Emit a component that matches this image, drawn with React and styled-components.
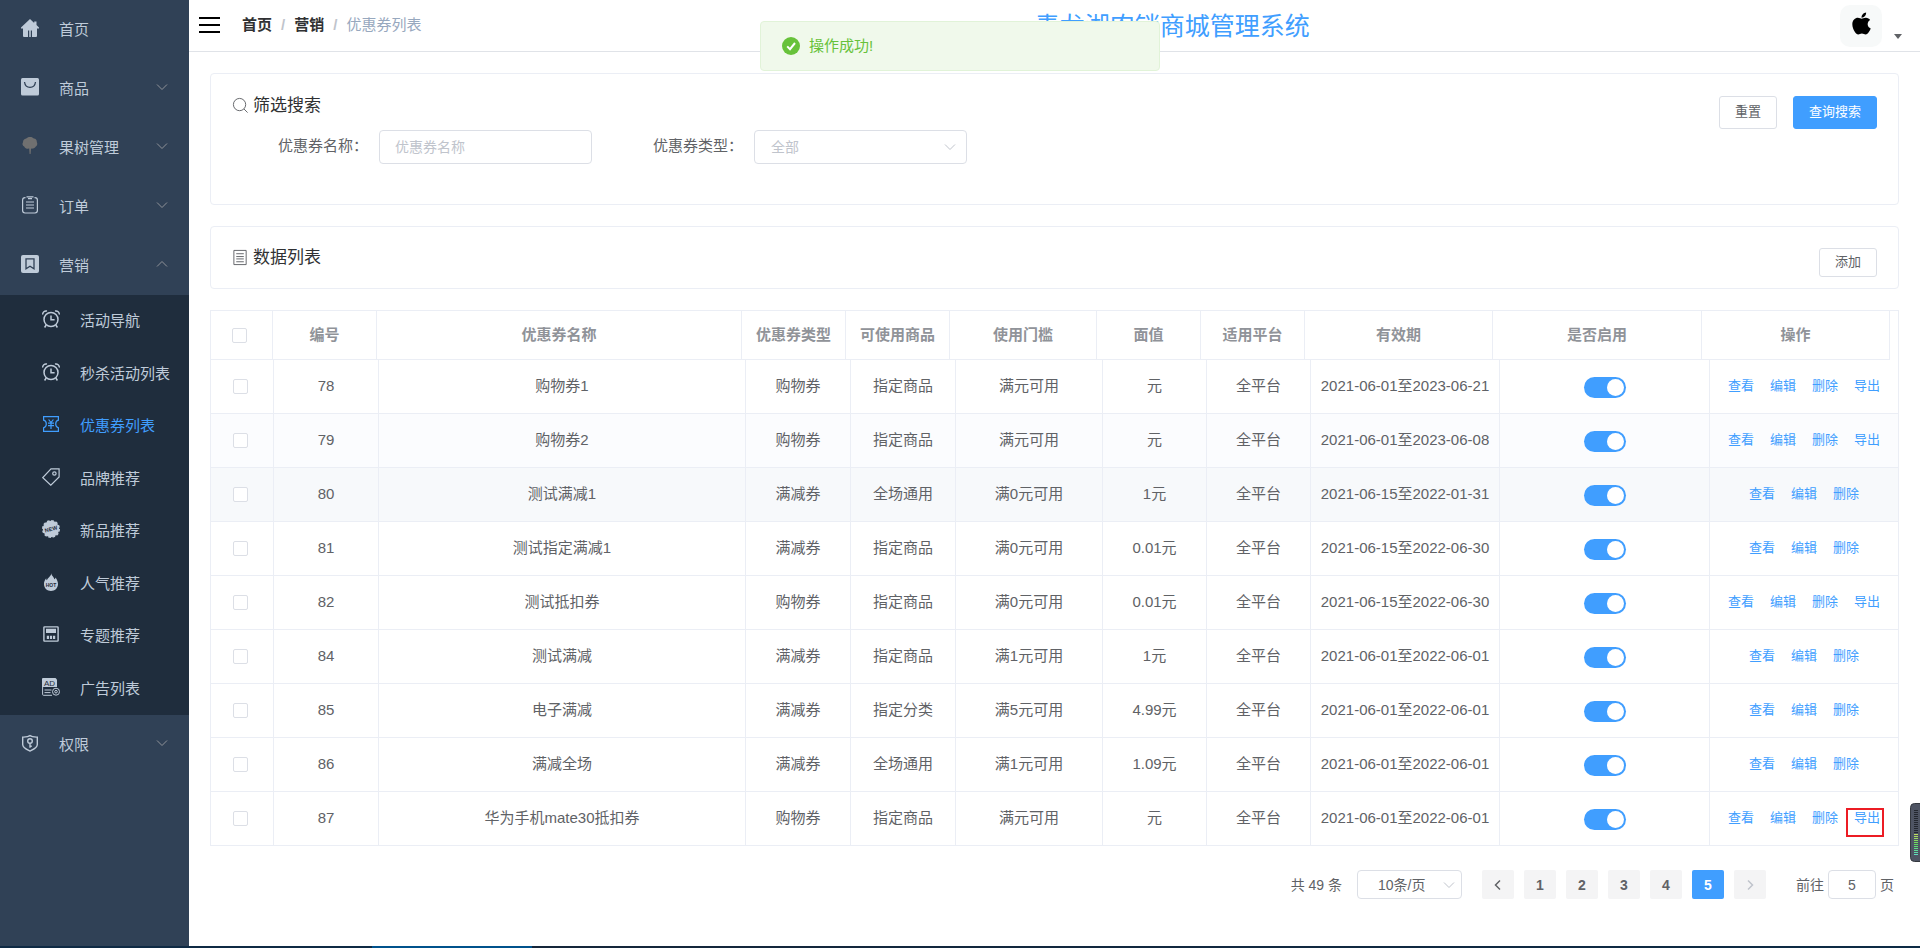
import React from 'react';
import styled, { createGlobalStyle } from 'styled-components';
import { FaApple } from 'react-icons/fa';

const Global = createGlobalStyle`
  *, *::before, *::after { box-sizing: border-box; }
  body {
    margin: 0;
    background: #fff;
    color: #606266;
    font-family: "Liberation Sans", "Noto Sans CJK SC", sans-serif;
    font-size: 15px;
    line-height: 20px;
  }
  button, input, select { font-family: inherit; margin: 0; }
  h1, h2, ul, ol { margin: 0; padding: 0; font-weight: 400; list-style: none; }
  a { color: inherit; text-decoration: none; }
  svg { display: block; flex: none; }
`;

/* ---------- icons ---------- */

const Glyph = styled.svg.attrs((p) => ({
  viewBox: `0 0 ${p.$box || 18} ${p.$box || 18}`,
  'aria-hidden': true,
}))`
  width: ${(p) => p.$size || 18}px;
  height: ${(p) => p.$size || 18}px;
  fill: none;
  stroke: ${(p) => (p.$solid ? 'none' : 'currentColor')};
  stroke-width: ${(p) => p.$weight || 1};
`;

const ChevronPath = ({ dir }) => {
  const paths = {
    down: 'M1 3.5 6 8.5 11 3.5',
    up: 'M1 8.5 6 3.5 11 8.5',
    left: 'M8 1.5 3.5 6 8 10.5',
    right: 'M4 1.5 8.5 6 4 10.5',
  };
  return <path d={paths[dir]} />;
};

const Chevron = ({ dir, size = 12, weight = 1 }) => (
  <Glyph $box={12} $size={size} $weight={weight}>
    <ChevronPath dir={dir} />
  </Glyph>
);

const Alarm = () => (
  <Glyph $weight="1.5">
    <circle cx="9" cy="9.5" r="7" />
    <path d="M9 5.5v4.300h3.600M.8 4.500C.4 2.200 2.600.5 5 1.100M17.200 4.500C17.600 2.200 15.400.5 13 1.100M4.200 15 2.600 17.500M13.800 15l1.600 2.500" />
  </Glyph>
);

const icons = {
  home: (
    <Glyph $solid>
      <path
        d="M9 0 0 8.500v1h2V17q0 1 1 1h4v-6.500h1.200V18h1.600v-6.500H11V18h4q1 0 1-1V9.500h2v-1L15.500 6V2.500h-2.300V4z"
        fill="currentColor"
      />
    </Glyph>
  ),
  bag: (
    <Glyph>
      <rect x="0" y="0" width="18" height="17.500" rx="1.500" fill="currentColor" stroke="none" />
      <path d="M3.500 4C4.500 11.200 13.500 11.200 14.500 4" stroke="#304156" strokeWidth="1.300" />
    </Glyph>
  ),
  tree: (
    <Glyph $solid>
      <path
        d="M9 0C11 0 12 .7 12.800 1.600 15 1.700 16 3.500 15.800 5c1 1.800.4 3.600-1 4.400C13.800 11 12 11.800 10 11.600L9.600 17H8.600L8.200 11.600C6 12 4 11.200 3.200 9.400 1.400 8.600 1 6.600 2 5.200 2 3.200 3.200 2 5.200 1.600 6 .6 7.400 0 9 0z"
        fill="#707070"
      />
    </Glyph>
  ),
  order: (
    <Glyph $weight="1.200">
      <path d="M4.500 1.600H4Q1.600 1.600 1.600 4v10.600Q1.600 17 4 17h10q2.400 0 2.400-2.400V4q0-2.400-2.400-2.400h-.5" />
      <path d="M5.500.8h7M7 2.600h4M5 6h8M5 9h8M5 12h8" />
    </Glyph>
  ),
  bookmark: (
    <Glyph>
      <rect x="0" y="0" width="18" height="18" rx="2" fill="currentColor" stroke="none" />
      <path d="M5 3.800h8v10l-4-2.600-4 2.600z" stroke="#304156" strokeWidth="1.300" />
    </Glyph>
  ),
  alarm: <Alarm />,
  coupon: (
    <Glyph $weight="1.200">
      <path d="M1.600 1.600h14.800v3.600c-3.600 1-3.600 6.600 0 7.600v3.600H1.600v-3.600c3.600-1 3.600-6.600 0-7.600z" />
      <path d="M6.600 4.500 9 7.500l2.400-3M6 8.200h6M6 10.600h6M9 7.500V14" />
    </Glyph>
  ),
  tag: (
    <Glyph $weight="1.200">
      <path d="M9 .9h8.100V9L8.800 17.200.8 9.600z" />
      <circle cx="12.400" cy="5.500" r="1.700" />
    </Glyph>
  ),
  fresh: (
    <Glyph $solid>
      <circle cx="9" cy="9" r="8.200" fill="currentColor" />
      <circle cx="9" cy="9" r="8.200" stroke="currentColor" strokeWidth="1.600" strokeDasharray="2.600 1.690" />
      <text x="9" y="11" textAnchor="middle" fontSize="5.500" fontWeight="700" fill="#1f2d3d" transform="rotate(-15 9 9)">
        NEW
      </text>
    </Glyph>
  ),
  hot: (
    <Glyph $solid>
      <path
        d="M9.400 0c-.2 2.600 2.400 3.600 3 6.200.8-.3 1-1 1-1.800 1.700 2 2.800 4.600 2.600 7.200-.3 3.800-3.200 6.400-7 6.400s-6.800-2.600-7-6.400C1.800 8.600 3 6.800 4.200 5.200c0 1 .2 1.600.8 2C5.600 4.400 9.200 3.600 9.400 0z"
        fill="currentColor"
      />
      <text x="9" y="13.500" textAnchor="middle" fontSize="5" fontWeight="700" fill="#1f2d3d">
        HOT
      </text>
    </Glyph>
  ),
  topic: (
    <Glyph $weight="1.400">
      <rect x="1.900" y="1.900" width="14.200" height="14.200" rx=".6" />
      <path d="M4 3.700h10v4.200H4zM4.800 10.800h2.200v3.200H4.800zM7.900 10.800h2.200v3.200H7.900zM11 10.800h2.200v3.200H11z" fill="currentColor" stroke="none" />
    </Glyph>
  ),
  ad: (
    <Glyph>
      <path d="M1 0h12.500L15 1.500V9H0V1Q0 0 1 0z" fill="currentColor" stroke="none" />
      <text x="7.500" y="7.600" textAnchor="middle" fontSize="8" fill="#1f2d3d" stroke="none">
        AD
      </text>
      <path d="M.6 9v7.400q0 .9.9.9H10M2.500 12h7M2.500 14.600h6" />
      <circle cx="14" cy="13.700" r="3.500" />
      <circle cx="14" cy="13.700" r="1.300" />
    </Glyph>
  ),
  shield: (
    <Glyph $weight="1.400">
      <path d="M9 1.600C7 3 4.600 3 1.700 3.200v7.300C1.700 14 5.500 15.400 9 17c3.500-1.600 7.300-3 7.300-6.500V3.200C13.400 3 11 3 9 1.600z" />
      <circle cx="9" cy="7" r="2.300" />
      <path d="M9 9.300v4.500M9 12.300h1.800" />
    </Glyph>
  ),
};

/* ---------- shell ---------- */

const Layout = styled.div`
  display: flex;
  min-height: 100vh;
`;

const Sidebar = styled.nav`
  flex: 0 0 189px;
  background: #304156;
  color: #bfcbd9;
`;

const MenuItem = styled.a`
  display: flex;
  align-items: center;
  gap: 20px;
  height: 59px;
  padding: 0 21px;
  > span { flex: 1; white-space: nowrap; }
  > svg { margin-bottom: 4px; }
  > svg:last-child:not(:first-child) { color: #909399; }
`;

const SubMenu = styled.ul`
  display: grid;
  grid-auto-rows: 1fr;
  min-height: 420px;
  background: #1f2d3d;
`;

const SubItem = styled.a`
  display: flex;
  align-items: center;
  gap: 20px;
  height: 100%;
  padding-left: 42px;
  white-space: nowrap;
  color: ${(p) => (p.$active ? '#409eff' : 'inherit')};
  > svg { margin-bottom: 4px; }
`;

const Page = styled.div`
  flex: 1;
  min-width: 0;
`;

const Header = styled.header`
  display: grid;
  grid-template-columns: 10fr auto 7fr;
  align-items: center;
  height: 52px;
  padding: 0 18px 0 0;
  border-bottom: 1px solid #e0e3e8;
`;

const HeaderStart = styled.div`
  display: flex;
  align-items: center;
  gap: 22px;
  padding: 0 0 2px 10px;
`;

const MenuToggle = styled.button`
  display: grid;
  gap: 5px;
  width: 21px;
  padding: 0;
  border: 0;
  background: none;
  i { height: 2px; background: #000; }
`;

const Crumbs = styled.ol`
  display: flex;
  li + li::before {
    content: "/";
    margin: 0 9px;
    font-weight: 700;
    color: #c0c4cc;
  }
`;

const Crumb = styled.li`
  color: ${(p) => (p.$last ? '#97a8be' : '#303133')};
  font-weight: ${(p) => (p.$last ? 400 : 700)};
`;

const SystemTitle = styled.h1`
  font-size: 25px;
  line-height: 32px;
  white-space: nowrap;
  color: #409eff;
`;

const UserMenu = styled.button`
  display: flex;
  align-items: flex-end;
  justify-self: end;
  gap: 12px;
  padding: 0;
  border: 0;
  background: none;
`;

const Avatar = styled.span`
  display: flex;
  justify-content: center;
  width: 42px;
  height: 42px;
  padding-top: 6px;
  border-radius: 10px;
  background: #f7f9f9;
  color: #000;
`;

const Caret = styled.span`
  margin-bottom: 8px;
  border: 4px solid transparent;
  border-top: 5px solid #606266;
  border-bottom: 0;
`;

const Main = styled.main`
  padding: 21px;
`;

/* ---------- cards ---------- */

const Card = styled.section`
  margin-bottom: 21px;
  padding: ${(p) => p.$pad};
  border: 1px solid #ebeef5;
  border-radius: 4px;
`;

const CardHead = styled.div`
  display: flex;
  align-items: flex-start;
  justify-content: space-between;
`;

const CardTitle = styled.h2`
  display: flex;
  align-items: center;
  gap: 4px;
  font-size: 17px;
  line-height: 20px;
  color: #303133;
  svg { margin-bottom: 2px; color: #606266; }
`;

const Actions = styled.div`
  display: flex;
  gap: 16px;
`;

const Button = styled.button`
  height: ${(p) => (p.$small ? 29 : 33)}px;
  padding: 0 15px 4px;
  border: 1px solid ${(p) => (p.$primary ? '#409eff' : '#dcdfe6')};
  border-radius: 3px;
  background: ${(p) => (p.$primary ? '#409eff' : '#fff')};
  color: ${(p) => (p.$primary ? '#fff' : '#606266')};
  font-size: 13px;
`;

const FilterForm = styled.form`
  display: flex;
  gap: 15px;
  margin-top: 1px;
`;

const Field = styled.div`
  display: flex;
  > label {
    width: 147px;
    padding-right: 11px;
    line-height: 32px;
    text-align: right;
    white-space: nowrap;
  }
`;

const control = `
  border: 1px solid #dcdfe6;
  border-radius: 4px;
  background: #fff;
  font-size: 14px;
  outline: 0;
`;

const TextBox = styled.input`
  ${control}
  width: 213px;
  height: 34px;
  padding: 0 15px;
  color: #606266;
  &::placeholder { color: #c0c4cc; opacity: 1; }
`;

const SelectWrap = styled.span`
  position: relative;
  display: inline-flex;
  color: #c0c4cc;
  > svg {
    position: absolute;
    right: ${(p) => (p.$small ? 7 : 11)}px;
    top: 50%;
    margin-top: -6px;
    pointer-events: none;
  }
`;

const Select = styled.select`
  ${control}
  appearance: none;
  width: ${(p) => (p.$small ? 105 : 213)}px;
  height: ${(p) => (p.$small ? 29 : 34)}px;
  padding: 0 ${(p) => (p.$small ? 20 : 16)}px;
  color: ${(p) => (p.$small ? '#606266' : '#c0c4cc')};
`;

/* ---------- table ---------- */

const Table = styled.table`
  display: block;
  border: 1px solid #ebeef5;
  border-bottom: 0;
  border-spacing: 0;
  thead, tbody { display: table; table-layout: fixed; border-spacing: 0; width: 100%; }
  thead { width: calc(100% - 8px); color: #909399; }
`;

const Row = styled.tr`
  background: ${(p) => p.$tint || '#fff'};
`;

const HeadCell = styled.th`
  width: ${(p) => p.$w}px;
  height: 49px;
  padding: ${(p) => (p.$check ? '0 0 0 21px' : 0)};
  border: solid #ebeef5;
  border-width: 0 1px 1px 0;
  text-align: ${(p) => (p.$check ? 'left' : 'center')};
  font-weight: 700;
  white-space: nowrap;
`;

const Cell = styled.td`
  width: ${(p) => p.$w}px;
  height: 54px;
  padding: ${(p) => (p.$check ? '0 0 0 22px' : '0 0 2px')};
  border: solid #ebeef5;
  border-width: 0 1px 1px 0;
  text-align: ${(p) => (p.$check ? 'left' : 'center')};
  white-space: nowrap;
  &:last-child { border-right: 0; }
`;

const Check = styled.input.attrs({ type: 'checkbox' })`
  appearance: none;
  display: block;
  width: 15px;
  height: 15px;
  border: 1px solid #dcdfe6;
  border-radius: 2px;
  background: #fff;
`;

const Switch = styled.input.attrs({ type: 'checkbox', role: 'switch' })`
  appearance: none;
  display: block;
  width: 42px;
  height: 21px;
  margin: 4px auto 0;
  padding: 2px;
  border-radius: 11px;
  background: #dcdfe6;
  &::before {
    content: "";
    display: block;
    width: 17px;
    height: 17px;
    border-radius: 50%;
    background: #fff;
  }
  &:checked { background: #409eff; }
  &:checked::before { margin-left: auto; }
`;

const RowActions = styled.div`
  display: flex;
  justify-content: center;
  gap: 16px;
  font-size: 13px;
  color: #409eff;
`;

const RowLink = styled.a`
  position: relative;
  &::after {
    content: ${(p) => (p.$marked ? '""' : 'none')};
    position: absolute;
    inset: 0 -4px -9px -8px;
    border: 2px solid #ec1c24;
  }
`;

/* ---------- pagination ---------- */

const Pagination = styled.nav`
  display: flex;
  align-items: center;
  justify-content: flex-end;
  gap: 15px;
  padding: 24px 5px 0 0;
  font-size: 14px;
`;

const Pages = styled.div`
  display: flex;
  gap: 10px;
  margin: 0 15px 0 5px;
`;

const PageButton = styled.button`
  display: flex;
  align-items: center;
  justify-content: center;
  width: 32px;
  height: 29px;
  padding: 0;
  border: 0;
  border-radius: 2px;
  background: ${(p) => (p.$active ? '#409eff' : '#f4f4f5')};
  color: ${(p) => (p.$active ? '#fff' : '#606266')};
  font-size: 14px;
  font-weight: 700;
  &:disabled { color: #c0c4cc; }
`;

const Jump = styled.label`
  display: flex;
  align-items: center;
  gap: 4px;
`;

const JumpBox = styled.input`
  ${control}
  width: 48px;
  height: 29px;
  padding: 0;
  color: #606266;
  text-align: center;
`;

/* ---------- overlays ---------- */

const Message = styled.div`
  position: fixed;
  top: 21px;
  left: 50%;
  transform: translateX(-50%);
  display: flex;
  align-items: center;
  gap: 9px;
  width: 400px;
  height: 50px;
  padding: 0 21px;
  border: 1px solid #e1f3d8;
  border-radius: 4px;
  background: #f0f9eb;
  color: #67c23a;
`;

const Meter = styled.svg`
  position: fixed;
  right: 0;
  top: 803px;
  width: 10px;
  height: 59px;
`;

const Dock = styled.div`
  position: fixed;
  inset: auto 0 0 0;
  height: 2px;
  background: linear-gradient(90deg, #0f2a44 372px, #00528c 372px, #00528c 532px, #15263a 532px, #0d2b45);
`;

/* ---------- data ---------- */

const menu = [
  { icon: 'home', label: '首页' },
  { icon: 'bag', label: '商品', dir: 'down' },
  { icon: 'tree', label: '果树管理', dir: 'down' },
  { icon: 'order', label: '订单', dir: 'down' },
  {
    icon: 'bookmark',
    label: '营销',
    dir: 'up',
    children: [
      ['alarm', '活动导航'],
      ['alarm', '秒杀活动列表'],
      ['coupon', '优惠券列表'],
      ['tag', '品牌推荐'],
      ['fresh', '新品推荐'],
      ['hot', '人气推荐'],
      ['topic', '专题推荐'],
      ['ad', '广告列表'],
    ],
  },
  { icon: 'shield', label: '权限', dir: 'down' },
];

const columns = [
  ['编号', 104, 105],
  ['优惠券名称', 365, 367],
  ['优惠券类型', 104, 105],
  ['可使用商品', 104, 105],
  ['使用门槛', 147, 147],
  ['面值', 104, 104],
  ['适用平台', 104, 104],
  ['有效期', 188, 189],
  ['是否启用', 209, 210],
  ['操作', 188, 188],
];

const rows = [
  ['78', '购物券1', '购物券', '指定商品', '满元可用', '元', '全平台', '2021-06-01至2023-06-21'],
  ['79', '购物券2', '购物券', '指定商品', '满元可用', '元', '全平台', '2021-06-01至2023-06-08'],
  ['80', '测试满减1', '满减券', '全场通用', '满0元可用', '1元', '全平台', '2021-06-15至2022-01-31'],
  ['81', '测试指定满减1', '满减券', '指定商品', '满0元可用', '0.01元', '全平台', '2021-06-15至2022-06-30'],
  ['82', '测试抵扣券', '购物券', '指定商品', '满0元可用', '0.01元', '全平台', '2021-06-15至2022-06-30'],
  ['84', '测试满减', '满减券', '指定商品', '满1元可用', '1元', '全平台', '2021-06-01至2022-06-01'],
  ['85', '电子满减', '满减券', '指定分类', '满5元可用', '4.99元', '全平台', '2021-06-01至2022-06-01'],
  ['86', '满减全场', '满减券', '全场通用', '满1元可用', '1.09元', '全平台', '2021-06-01至2022-06-01'],
  ['87', '华为手机mate30抵扣券', '购物券', '指定商品', '满元可用', '元', '全平台', '2021-06-01至2022-06-01'],
];

const tints = { 79: '#fbfcfe', 80: '#f7f9fb' };

/* ---------- page ---------- */

const SideMenu = () => (
  <Sidebar aria-label="主菜单">
    <ul>
      {menu.map((m) => (
        <li key={m.label}>
          <MenuItem href="#">
            {icons[m.icon]}
            <span>{m.label}</span>
            {m.dir && <Chevron dir={m.dir} />}
          </MenuItem>
          {m.children && (
            <SubMenu>
              {m.children.map(([icon, label]) => (
                <li key={label}>
                  <SubItem href="#" $active={label === '优惠券列表'}>
                    {icons[icon]}
                    <span>{label}</span>
                  </SubItem>
                </li>
              ))}
            </SubMenu>
          )}
        </li>
      ))}
    </ul>
  </Sidebar>
);

const CouponTable = () => (
  <Table>
    <thead>
      <tr>
        <HeadCell $w={62} $check>
          <Check aria-label="全选" />
        </HeadCell>
        {columns.map(([label, w]) => (
          <HeadCell key={label} $w={w} scope="col">
            {label}
          </HeadCell>
        ))}
      </tr>
    </thead>
    <tbody>
      {rows.map((row) => {
        const links = ['查看', '编辑', '删除'];
        if (row[2] === '购物券') links.push('导出');
        return (
          <Row key={row[0]} $tint={tints[row[0]]}>
            <Cell $w={63} $check>
              <Check aria-label={`选择 ${row[0]}`} />
            </Cell>
            {row.map((text, i) => (
              <Cell key={columns[i][0]} $w={columns[i][2]}>
                {text}
              </Cell>
            ))}
            <Cell $w={columns[8][2]}>
              <Switch defaultChecked aria-label={`启用 ${row[0]}`} />
            </Cell>
            <Cell $w={columns[9][2]}>
              <RowActions>
                {links.map((l) => (
                  <RowLink key={l} href="#" $marked={row[0] === '87' && l === '导出'}>
                    {l}
                  </RowLink>
                ))}
              </RowActions>
            </Cell>
          </Row>
        );
      })}
    </tbody>
  </Table>
);

const meterBars = Array.from({ length: 23 }, (_, i) => {
  if (i < 12) return '#23272f';
  return `hsl(${75 + (i - 12) * 9} 65% 62%)`;
});

export default function App() {
  return (
    <>
      <Global />
      <Layout>
        <SideMenu />
        <Page>
          <Header>
            <HeaderStart>
              <MenuToggle type="button" aria-label="折叠菜单">
                <i />
                <i />
                <i />
              </MenuToggle>
              <Crumbs>
                <Crumb>
                  <a href="#">首页</a>
                </Crumb>
                <Crumb>
                  <a href="#">营销</a>
                </Crumb>
                <Crumb $last>优惠券列表</Crumb>
              </Crumbs>
            </HeaderStart>
            <SystemTitle>青龙湖农销商城管理系统</SystemTitle>
            <UserMenu type="button" aria-label="用户菜单">
              <Avatar>
                <FaApple size={25} />
              </Avatar>
              <Caret />
            </UserMenu>
          </Header>

          <Main>
            <Card $pad="22px 21px 40px">
              <CardHead>
                <CardTitle>
                  <Glyph $size={17}>
                    <circle cx="8" cy="8" r="6.500" />
                    <path d="M12.700 12.700 16.500 16.500" />
                  </Glyph>
                  筛选搜索
                </CardTitle>
                <Actions>
                  <Button type="button">重置</Button>
                  <Button type="button" $primary>
                    查询搜索
                  </Button>
                </Actions>
              </CardHead>
              <FilterForm>
                <Field>
                  <label htmlFor="coupon-name">优惠券名称：</label>
                  <TextBox id="coupon-name" placeholder="优惠券名称" />
                </Field>
                <Field>
                  <label htmlFor="coupon-type">优惠券类型：</label>
                  <SelectWrap>
                    <Select id="coupon-type">
                      <option>全部</option>
                    </Select>
                    <Chevron dir="down" />
                  </SelectWrap>
                </Field>
              </FilterForm>
            </Card>

            <Card $pad="21px 21px 11px">
              <CardHead>
                <CardTitle>
                  <Glyph $size={17}>
                    <path d="M2 1.500h13v15H2zM4.500 5h8M4.500 8h8M4.500 10.500h8M4.500 13.500h8" />
                  </Glyph>
                  数据列表
                </CardTitle>
                <Button type="button" $small>
                  添加
                </Button>
              </CardHead>
            </Card>

            <CouponTable />

            <Pagination aria-label="分页">
              <span>共 49 条</span>
              <SelectWrap $small>
                <Select $small aria-label="每页条数">
                  <option>10条/页</option>
                </Select>
                <Chevron dir="down" />
              </SelectWrap>
              <Pages>
                <PageButton type="button" aria-label="上一页">
                  <Chevron dir="left" weight={1.5} />
                </PageButton>
                {[1, 2, 3, 4, 5].map((n) => (
                  <PageButton type="button" key={n} $active={n === 5}>
                    {n}
                  </PageButton>
                ))}
                <PageButton type="button" aria-label="下一页" disabled>
                  <Chevron dir="right" weight={1.5} />
                </PageButton>
              </Pages>
              <Jump>
                前往
                <JumpBox defaultValue="5" />
                页
              </Jump>
            </Pagination>
          </Main>
        </Page>
      </Layout>

      <Message role="status">
        <Glyph $solid>
          <circle cx="9" cy="9" r="9" fill="#67c23a" />
          <path d="M5.200 9.400 8 12.200 13 6" stroke="#fff" strokeWidth="2" />
        </Glyph>
        操作成功!
      </Message>
      <Meter viewBox="0 0 10 59" aria-hidden="true">
        <rect x=".5" y=".5" width="14" height="58" rx="4" fill="#4e5463" stroke="#34383f" />
        {meterBars.map((c, i) => (
          <rect key={i} x="4" y={7 + i * 2} width="4" height="1" fill={c} />
        ))}
      </Meter>
      <Dock />
    </>
  );
}
